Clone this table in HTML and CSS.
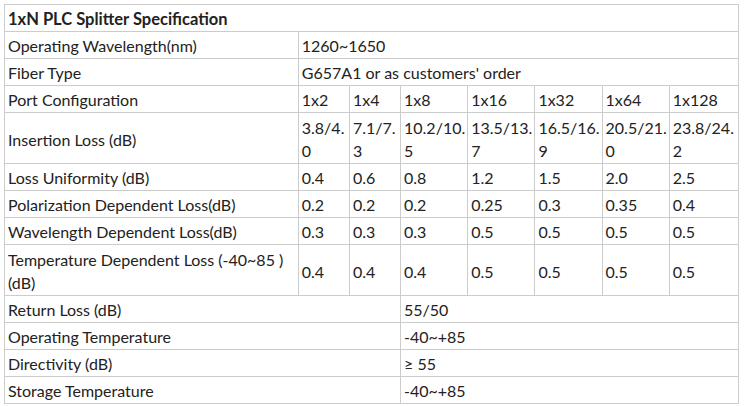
FILE: index.html
```html
<!DOCTYPE html>
<html>
<head>
<meta charset="utf-8">
<link rel="stylesheet" href="styles.css">
</head>
<body>
<table class="spec">
  <colgroup>
    <col class="c-label">
    <col class="c-a"><col class="c-a">
    <col class="c-b"><col class="c-b"><col class="c-b"><col class="c-b"><col class="c-c">
  </colgroup>
  <tr><td colspan="8" class="title">1xN PLC Splitter Specification</td></tr>
  <tr><td>Operating Wavelength(nm)</td><td colspan="7">1260~1650</td></tr>
  <tr><td>Fiber Type</td><td colspan="7">G657A1 or as customers' order</td></tr>
  <tr><td>Port Configuration</td><td>1x2</td><td>1x4</td><td>1x8</td><td>1x16</td><td>1x32</td><td>1x64</td><td>1x128</td></tr>
  <tr class="two"><td>Insertion Loss (dB)</td><td>3.8/4.<br>0</td><td>7.1/7.<br>3</td><td>10.2/10.<br>5</td><td>13.5/13.<br>7</td><td>16.5/16.<br>9</td><td>20.5/21.<br>0</td><td>23.8/24.<br>2</td></tr>
  <tr><td>Loss Uniformity (dB)</td><td>0.4</td><td>0.6</td><td>0.8</td><td>1.2</td><td>1.5</td><td>2.0</td><td>2.5</td></tr>
  <tr><td>Polarization Dependent Loss(dB)</td><td>0.2</td><td>0.2</td><td>0.2</td><td>0.25</td><td>0.3</td><td>0.35</td><td>0.4</td></tr>
  <tr><td>Wavelength Dependent Loss(dB)</td><td>0.3</td><td>0.3</td><td>0.3</td><td>0.5</td><td>0.5</td><td>0.5</td><td>0.5</td></tr>
  <tr class="two"><td>Temperature Dependent Loss (-40~85 )<br>(dB)</td><td>0.4</td><td>0.4</td><td>0.4</td><td>0.5</td><td>0.5</td><td>0.5</td><td>0.5</td></tr>
  <tr><td colspan="3">Return Loss (dB)</td><td colspan="5">55/50</td></tr>
  <tr><td colspan="3">Operating Temperature</td><td colspan="5">-40~+85</td></tr>
  <tr><td colspan="3">Directivity (dB)</td><td colspan="5">≥ 55</td></tr>
  <tr><td colspan="3">Storage Temperature</td><td colspan="5">-40~+85</td></tr>
</table>
</body>
</html>
```

FILE: styles.css
```css
html, body {
  margin: 0;
  background: #ffffff;
}
body {
  padding: 4px;
  font-family: Lato, "Liberation Sans", sans-serif;
  font-size: 16px;
  color: #222222;
}
.spec {
  border-collapse: collapse;
  table-layout: fixed;
  width: 735px;
}
.c-label { width: 293px; }
.c-a { width: 51px; }
.c-b { width: 67px; }
.c-c { width: 69px; }
.spec td {
  border: 1px solid #cccccc;
  padding: 3px 3px 1px;
  line-height: 22px;
  vertical-align: middle;
  white-space: nowrap;
  overflow: hidden;
}
.spec .two td {
  line-height: 23px;
}
.spec td.title {
  font-weight: bold;
  font-size: 16.5px;
}
```
